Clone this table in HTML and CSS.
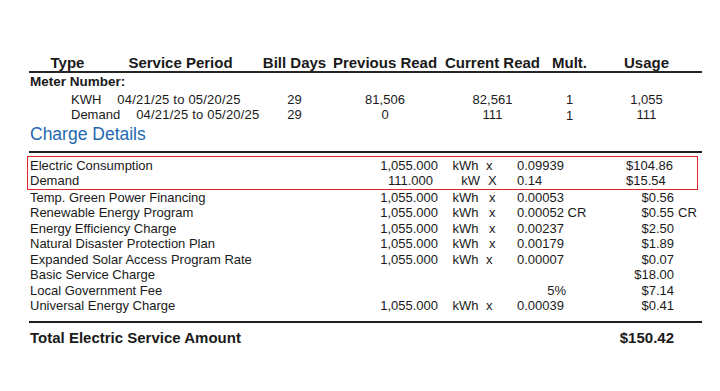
FILE: index.html
```html
<!DOCTYPE html>
<html>
<head>
<meta charset="utf-8">
<link rel="stylesheet" href="styles.css">
</head>
<body>
<div class="page">
  <div class="meter">
    <div class="mrow head">
      <div>Type</div>
      <div class="period-head">Service Period</div>
      <div>Bill Days</div>
      <div>Previous Read</div>
      <div>Current Read</div>
      <div>Mult.</div>
      <div>Usage</div>
    </div>
    <div class="meter-num">Meter Number:</div>
    <div class="mrow data first">
      <div class="span2"><span>KWH</span><span class="date">04/21/25 to 05/20/25</span></div>
      <div>29</div>
      <div>81,506</div>
      <div>82,561</div>
      <div>1</div>
      <div>1,055</div>
    </div>
    <div class="mrow data">
      <div class="span2"><span>Demand</span><span class="date">04/21/25 to 05/20/25</span></div>
      <div>29</div>
      <div>0</div>
      <div>111</div>
      <div class="low">1</div>
      <div>111</div>
    </div>
  </div>

  <h2 class="section">Charge Details</h2>

  <div class="charges">
    <div class="highlight">
      <div class="crow">
        <div>Electric Consumption</div>
        <div class="qty">1,055.000</div>
        <div class="unit">kWh</div>
        <div class="op">x</div>
        <div class="rate"><span class="rv">0.09939</span></div>
        <div class="amt left">$104.86</div>
        <div></div>
      </div>
      <div class="crow">
        <div>Demand</div>
        <div class="qty short">111.000</div>
        <div class="unit kw">kW</div>
        <div class="op big">X</div>
        <div class="rate"><span class="rv">0.14</span></div>
        <div class="amt left">$15.54</div>
        <div></div>
      </div>
    </div>
    <div class="crow">
      <div>Temp. Green Power Financing</div>
      <div class="qty">1,055.000</div>
      <div class="unit">kWh</div>
      <div class="op wide">x</div>
      <div class="rate"><span class="rv">0.00053</span></div>
      <div class="amt">$0.56</div>
      <div></div>
    </div>
    <div class="crow">
      <div>Renewable Energy Program</div>
      <div class="qty">1,055.000</div>
      <div class="unit">kWh</div>
      <div class="op wide">x</div>
      <div class="rate"><span class="rv">0.00052 CR</span></div>
      <div class="amt">$0.55</div>
      <div class="suffix">CR</div>
    </div>
    <div class="crow">
      <div>Energy Efficiency Charge</div>
      <div class="qty">1,055.000</div>
      <div class="unit">kWh</div>
      <div class="op wide">x</div>
      <div class="rate"><span class="rv">0.00237</span></div>
      <div class="amt">$2.50</div>
      <div></div>
    </div>
    <div class="crow">
      <div>Natural Disaster Protection Plan</div>
      <div class="qty">1,055.000</div>
      <div class="unit">kWh</div>
      <div class="op wide">x</div>
      <div class="rate"><span class="rv">0.00179</span></div>
      <div class="amt">$1.89</div>
      <div></div>
    </div>
    <div class="crow">
      <div>Expanded Solar Access Program Rate</div>
      <div class="qty">1,055.000</div>
      <div class="unit">kWh</div>
      <div class="op">x</div>
      <div class="rate"><span class="rv">0.00007</span></div>
      <div class="amt">$0.07</div>
      <div></div>
    </div>
    <div class="crow">
      <div>Basic Service Charge</div>
      <div class="qty"></div>
      <div class="unit"></div>
      <div class="op"></div>
      <div class="rate"></div>
      <div class="amt">$18.00</div>
      <div></div>
    </div>
    <div class="crow">
      <div>Local Government Fee</div>
      <div class="qty"></div>
      <div class="unit"></div>
      <div class="op"></div>
      <div class="rate"><span class="rv pct">5%</span></div>
      <div class="amt">$7.14</div>
      <div></div>
    </div>
    <div class="crow">
      <div>Universal Energy Charge</div>
      <div class="qty">1,055.000</div>
      <div class="unit">kWh</div>
      <div class="op">x</div>
      <div class="rate"><span class="rv">0.00039</span></div>
      <div class="amt">$0.41</div>
      <div></div>
    </div>
  </div>

  <div class="total">
    <span>Total Electric Service Amount</span>
    <span>$150.42</span>
  </div>
</div>
</body>
</html>
```

FILE: styles.css
```css
html, body {
  margin: 0;
  padding: 0;
  background: #ffffff;
}

body {
  color: #1a1a1a;
  font-family: "Liberation Sans", Arial, sans-serif;
  font-size: 13px;
}

.page {
  width: 673px;
  padding: 54px 18px 0 29px;
}

/* ---------- meter table ---------- */
.mrow {
  display: grid;
  grid-template-columns: 77px 153.5px 70px 111px 104px 50px 104px;
  text-align: center;
  white-space: nowrap;
}

.head {
  font-size: 15px;
  font-weight: bold;
  line-height: 17px;
  border-bottom: 2px solid #262626;
}

.period-head {
  padding-right: 4.5px;
}

.meter-num {
  font-size: 13.5px;
  font-weight: bold;
  line-height: 15px;
  margin-top: 1.3px;
  padding-left: 1px;
}

.data {
  font-size: 13px;
  line-height: 14.7px;
}

.data.first {
  margin-top: 4px;
}

.span2 {
  grid-column: span 2;
  display: flex;
  gap: 16px;
  padding-left: 42px;
  text-align: left;
}

.date {
  letter-spacing: 0.2px;
}

.low {
  position: relative;
  top: 1px;
}

/* ---------- charge details ---------- */
.section {
  margin: 1.7px 0 0 0;
  padding: 0 0 6.6px 1px;
  font-size: 17.5px;
  font-weight: normal;
  line-height: 20px;
  color: #2468b0;
  border-bottom: 2px solid #1e1e1e;
}

.charges {
  padding-bottom: 7px;
  border-bottom: 2px solid #1e1e1e;
}

.highlight {
  margin: 3px 4px 0 -2px;
  padding: 1px 0 0 1px;
  border: 1px solid #e2232b;
}

.crow {
  display: grid;
  grid-template-columns: 340px 68px 42px 37px 109px 48px auto;
  padding-left: 1px;
  font-size: 13px;
  line-height: 15.5px;
  white-space: nowrap;
}

.qty {
  text-align: right;
}

.qty.short {
  padding-right: 5px;
}

.unit {
  text-align: right;
  padding-right: 1.5px;
}

.unit.kw {
  padding-right: 0;
}

.op {
  padding-left: 6px;
}

.op.wide {
  padding-left: 9px;
}

.op.big {
  padding-left: 8px;
}

.rv {
  display: inline-block;
  min-width: 49px;
}

.rv.pct {
  text-align: right;
}

.amt {
  text-align: right;
}

.amt.left {
  text-align: left;
}

.suffix {
  padding-left: 4px;
}

/* ---------- total ---------- */
.total {
  display: flex;
  justify-content: space-between;
  padding: 5.6px 28px 0 1px;
  font-size: 15px;
  font-weight: bold;
  line-height: 17px;
}
```
